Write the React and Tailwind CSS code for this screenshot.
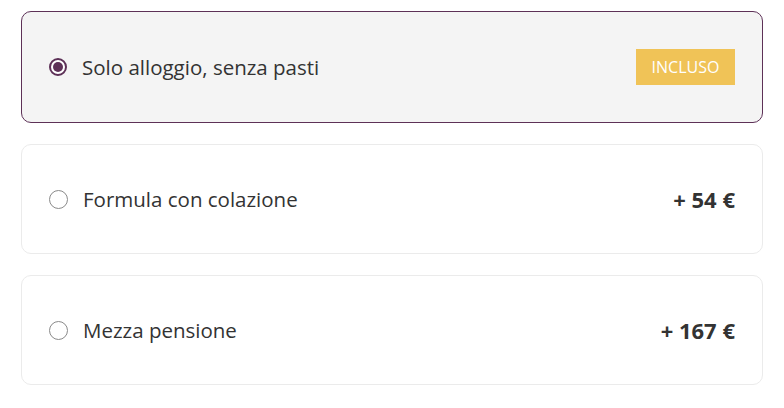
import React from "react";

function Radio({ checked }) {
  if (checked) {
    return (
      <span className="flex h-[18px] w-[18px] shrink-0 items-center justify-center rounded-full border-2 border-[#5d3157] bg-white">
        <span className="h-[10px] w-[10px] rounded-full bg-[#5d3157]" />
      </span>
    );
  }
  return <span className="h-[19px] w-[19px] shrink-0 rounded-full border border-[#8a8a8a] bg-white" />;
}

function Option({ label, checked, right }) {
  return (
    <div
      className={
        "flex items-center justify-between rounded-[10px] border pl-[27px] pr-[27px] " +
        (checked ? "h-[112px] border-[#5d3157] bg-[#f4f4f4]" : "h-[110px] border-[#ebebeb] bg-white")
      }
    >
      <div className="flex items-center gap-[15px]">
        <Radio checked={checked} />
        <span className="text-[20.5px] text-[#333]">{label}</span>
      </div>
      {right}
    </div>
  );
}

export default function App() {
  return (
    <div
      className="flex h-[408px] w-[784px] flex-col gap-[21px] bg-white px-[21px] pt-[11px]"
      style={{ fontFamily: '"Open Sans", "Noto Sans", sans-serif' }}
    >
      <Option
        checked
        label="Solo alloggio, senza pasti"
        right={
          <span className="flex h-[36px] w-[99px] items-center justify-center bg-[#f0c357] text-[16px] text-white">
            INCLUSO
          </span>
        }
      />
      <Option
        label="Formula con colazione"
        right={<span className="text-[22px] font-bold text-[#333]">+ 54 €</span>}
      />
      <Option
        label="Mezza pensione"
        right={<span className="text-[22px] font-bold text-[#333]">+ 167 €</span>}
      />
    </div>
  );
}
